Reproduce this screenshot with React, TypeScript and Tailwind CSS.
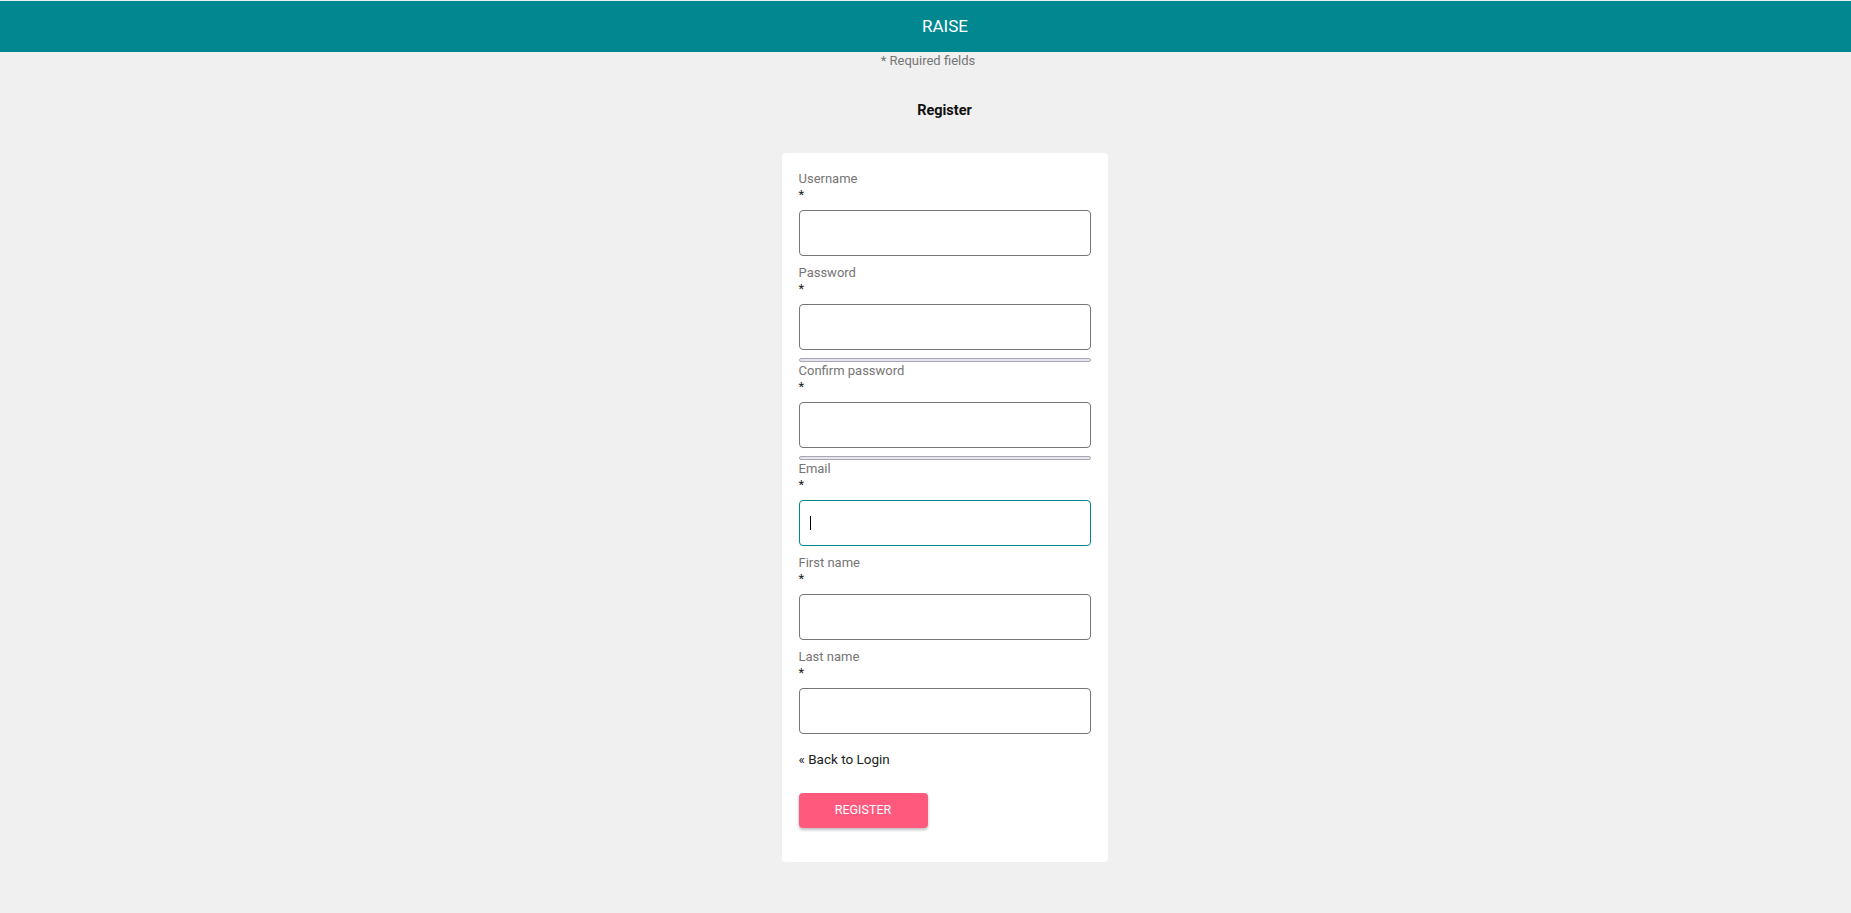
import React from 'react';

type FieldProps = {
  label: string;
  type?: string;
  focused?: boolean;
  meter?: boolean;
};

const Field: React.FC<FieldProps> = ({ label, type = 'text', focused, meter }) => {
  return (
    <div className="flex flex-col">
      <label className="text-[13px] leading-[17px] text-[#757575]">{label}</label>
      <span className="text-[13px] leading-[15px] text-[#212121]">*</span>
      <div className="relative mt-[8px]">
        <input
          type={type}
          readOnly
          tabIndex={-1}
          className={`block w-full h-[46px] rounded-[4px] border bg-white px-3 outline-none ${
            focused ? 'border-[#00878f]' : 'border-[#767676]'
          }`}
        />
        {/* static caret of the focused field */}
        {focused && <span className="absolute left-[11px] top-[16px] w-px h-[14px] bg-black" />}
      </div>
      {meter && (
        <div className="mt-[8px] h-[4px] rounded-full border border-[#a8a8b4] bg-[#e6e5ee]" />
      )}
    </div>
  );
};

const App: React.FC = () => {
  return (
    <div
      className="min-h-screen bg-[#f0f0f0] pt-px"
      style={{ fontFamily: 'Roboto, "Noto Sans", sans-serif' }}
    >
      {/* Top bar */}
      <header className="h-[51px] bg-[#00878f] flex items-center justify-center pl-[39px]">
        <span className="text-[17px] text-white">RAISE</span>
      </header>

      <p className="text-center text-[13px] leading-[18px] text-[#757575] pl-[5px]">* Required fields</p>

      <div className="flex flex-col items-center pl-[38px]">
        <h1 className="mt-[32px] text-[14.5px] leading-[18px] font-bold text-[#111]">Register</h1>

        <div className="mt-[33px] w-[326px] bg-white rounded-[4px] pt-[17px] pl-[17px] pr-[17px] pb-[34px]">
          <div className="flex flex-col gap-[8px]">
            <Field label="Username" />
            <Field label="Password" type="password" meter />
          </div>
          <div className="flex flex-col gap-[8px]">
            <Field label="Confirm password" type="password" meter />
          </div>
          <div className="flex flex-col gap-[8px]">
            <Field label="Email" focused />
            <Field label="First name" />
            <Field label="Last name" />
          </div>

          <a href="#" className="block mt-[17px] text-[13.5px] leading-[16px] text-[#212121]">
            « Back to Login
          </a>

          <button
            type="button"
            className="mt-[26px] w-[129px] h-[35px] rounded-[4px] bg-[#ff5a7e] text-white text-[12.5px] shadow-[0_2px_3px_rgba(0,0,0,0.25)]"
          >
            REGISTER
          </button>
        </div>
      </div>
    </div>
  );
};

export default App;
